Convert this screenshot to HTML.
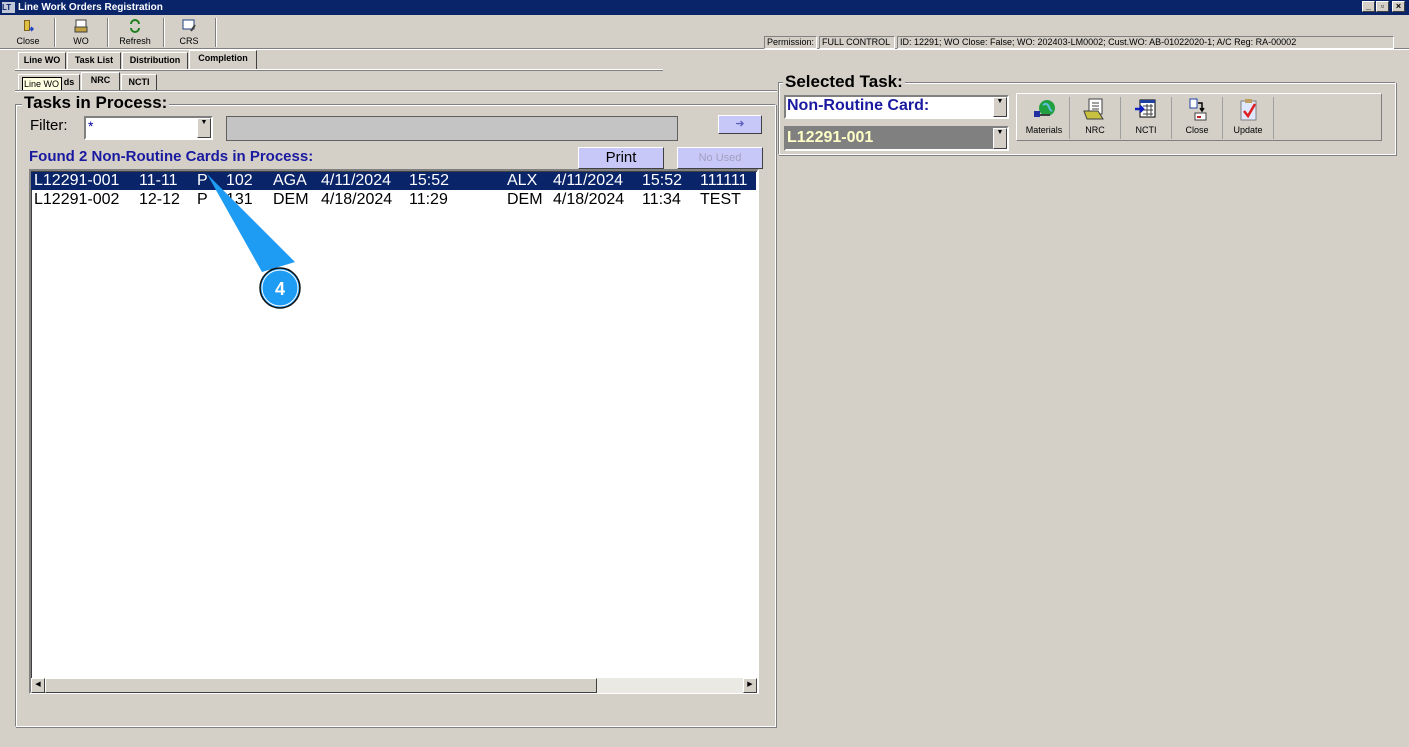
<!DOCTYPE html>
<html><head><meta charset="utf-8">
<style>
*{box-sizing:border-box;margin:0;padding:0}
body{width:1409px;height:747px;background:#d4d0c8;font-family:"Liberation Sans",Arial,sans-serif;position:relative;overflow:hidden;color:#000}
.a{position:absolute}
.title{left:0;top:0;width:1409px;height:15px;background:#0a246a;color:#fff;font-size:10px;font-weight:bold;line-height:15px;padding-left:18px}
.wb{top:1px;width:13px;height:11px;background:#d4d0c8;border:1px solid;border-color:#fff #404040 #404040 #fff;font-size:9px;line-height:9px;text-align:center;font-weight:bold;color:#000}
.tb{top:18px;height:30px;font-size:9px;text-align:center;color:#000}
.sep{top:18px;width:2px;height:29px;border-left:1px solid #808080;border-right:1px solid #fff}
.sunk{border:1px solid;border-color:#808080 #fff #fff #808080;font-size:9px;line-height:11px;padding-left:2px;white-space:nowrap;overflow:hidden}
.tab{font-size:9px;font-weight:bold;line-height:14px;text-align:center;border:1px solid;border-color:#fff #404040 transparent #fff;border-bottom:none}
.grp{border:1px solid;border-color:#808080 #fff #fff #808080;box-shadow:inset 1px 1px 0 #fff,1px 1px 0 #808080}
.gt{font-size:16px;font-weight:bold;background:#d4d0c8;padding:0 2px;line-height:16px}
.btn{background:#c8c8f8;border:1px solid;border-color:#fff #404040 #404040 #fff;text-align:center}
.list{background:#fff;border:2px solid;border-color:#808080 #fff #fff #808080;box-shadow:inset 1px 1px 0 #404040}
.row{font-size:16px;line-height:17px;white-space:nowrap;height:17px}
.row span{position:absolute;top:0}
.combo{background:#fff;border:2px solid;border-color:#808080 #fff #fff #808080}
.dd{position:absolute;right:0;top:0;width:14px;height:100%;background:#d4d0c8;border:1px solid;border-color:#fff #404040 #404040 #fff;font-size:7px;text-align:center}
.tbt{top:97px;height:42px;width:51px;font-size:9px;text-align:center;border-right:1px solid #a0a0a0}
</style></head><body>
<div class="a title">Line Work Orders Registration</div>
<div class="a" style="left:2px;top:2px;width:13px;height:11px;background:#c0c8d8;font-size:8px;color:#0a246a;font-weight:bold;line-height:11px">LT</div>
<div class="a wb" style="left:1362px">_</div>
<div class="a wb" style="left:1376px">▫</div>
<div class="a wb" style="left:1392px">×</div>

<div class="a tb" style="left:6px;width:44px">
<svg width="16" height="16" viewBox="0 0 16 16"><rect x="4" y="2" width="6" height="11" fill="#806020"/><rect x="5" y="3" width="4" height="9" fill="#e0c040"/><path d="M9 11h4M11 9l2 2-2 2" stroke="#2040c0" stroke-width="1.5" fill="none"/></svg><br>Close</div>
<div class="a sep" style="left:54px"></div>
<div class="a tb" style="left:59px;width:44px">
<svg width="16" height="16" viewBox="0 0 16 16"><rect x="3" y="2" width="10" height="8" fill="#fff" stroke="#404040"/><rect x="2" y="9" width="12" height="5" fill="#c0a040" stroke="#404040"/></svg><br>WO</div>
<div class="a sep" style="left:107px"></div>
<div class="a tb" style="left:112px;width:46px">
<svg width="16" height="16" viewBox="0 0 16 16"><path d="M4 6a4 4 0 0 1 8 0M12 10a4 4 0 0 1-8 0" stroke="#208020" stroke-width="2" fill="none"/></svg><br>Refresh</div>
<div class="a sep" style="left:163px"></div>
<div class="a tb" style="left:167px;width:44px">
<svg width="16" height="16" viewBox="0 0 16 16"><rect x="2" y="2" width="11" height="9" fill="#fff" stroke="#204080"/><path d="M10 13l4-6" stroke="#404040" stroke-width="2"/></svg><br>CRS</div>
<div class="a sep" style="left:215px"></div>

<div class="a" style="left:0;top:48px;width:1409px;height:1px;background:#808080"></div>
<div class="a" style="left:0;top:49px;width:1409px;height:1px;background:#fff"></div>

<div class="a sunk" style="left:764px;top:36px;width:53px;height:13px">Permission:</div>
<div class="a sunk" style="left:819px;top:36px;width:76px;height:13px">FULL CONTROL</div>
<div class="a sunk" style="left:897px;top:36px;width:497px;height:13px">ID: 12291; WO Close: False; WO: 202403-LM0002; Cust.WO: AB-01022020-1; A/C Reg: RA-00002</div>

<div class="a tab" style="left:18px;top:52px;width:48px;height:17px">Line WO</div>
<div class="a tab" style="left:67px;top:52px;width:54px;height:17px">Task List</div>
<div class="a tab" style="left:122px;top:52px;width:66px;height:17px">Distribution</div>
<div class="a tab" style="left:189px;top:50px;width:68px;height:19px;background:#d4d0c8">Completion</div>
<div class="a" style="left:15px;top:69px;width:648px;height:1px;background:#fff"></div>
<div class="a" style="left:15px;top:70px;width:648px;height:1px;background:#808080"></div>

<div class="a tab" style="left:18px;top:74px;width:62px;height:17px;padding-left:40px">ds</div>
<div class="a tab" style="left:81px;top:72px;width:39px;height:19px">NRC</div>
<div class="a tab" style="left:121px;top:74px;width:36px;height:17px">NCTI</div>
<div class="a" style="left:22px;top:77px;width:40px;height:14px;background:#ffffe1;border:1px solid #000;font-size:9px;line-height:12px;padding-left:1px">Line WO</div>
<div class="a" style="left:15px;top:91px;width:762px;height:1px;background:#fff"></div>
<div class="a" style="left:15px;top:90px;width:762px;height:1px;background:#808080"></div>

<div class="a grp" style="left:15px;top:104px;width:761px;height:623px"></div>
<div class="a gt" style="left:22px;top:95px;font-size:17px">Tasks in Process:</div>
<div class="a" style="left:30px;top:117px;font-size:15px">Filter:</div>
<div class="a combo" style="left:84px;top:116px;width:129px;height:24px"><span style="position:absolute;left:2px;top:0;font-size:14px;color:#0000a0">*</span><div class="dd">▼</div></div>
<div class="a" style="left:226px;top:116px;width:452px;height:25px;background:#c4c4c4;border:1px solid #606060"></div>
<div class="a btn" style="left:718px;top:115px;width:44px;height:19px;font-size:11px;color:#6060c0;line-height:16px">➜</div>
<div class="a" style="left:29px;top:148px;font-size:15px;font-weight:bold;color:#1a1aa0">Found 2 Non-Routine Cards in Process:</div>
<div class="a btn" style="left:578px;top:147px;width:86px;height:22px;font-size:15px;line-height:20px">Print</div>
<div class="a btn" style="left:677px;top:147px;width:86px;height:22px;font-size:11px;line-height:20px;color:#a0a0c0">No Used</div>

<div class="a list" style="left:29px;top:169px;width:730px;height:525px">
 <div class="a row" style="left:0;top:1px;width:725px;background:#0a246a;color:#fff;height:18px"><span style="left:3px">L12291-001</span><span style="left:108px">11-11</span><span style="left:166px">P</span><span style="left:195px">102</span><span style="left:242px">AGA</span><span style="left:290px">4/11/2024</span><span style="left:378px">15:52</span><span style="left:476px">ALX</span><span style="left:522px">4/11/2024</span><span style="left:611px">15:52</span><span style="left:669px">111111</span></div>
 <div class="a row" style="left:0;top:20px;width:725px"><span style="left:3px">L12291-002</span><span style="left:108px">12-12</span><span style="left:166px">P</span><span style="left:195px">131</span><span style="left:242px">DEM</span><span style="left:290px">4/18/2024</span><span style="left:378px">11:29</span><span style="left:476px">DEM</span><span style="left:522px">4/18/2024</span><span style="left:611px">11:34</span><span style="left:669px">TEST</span></div>
 <div class="a" style="left:0;top:507px;width:726px;height:15px;background:#ebe9e4"></div>
 <div class="a" style="left:0;top:507px;width:14px;height:15px;background:#d4d0c8;border:1px solid;border-color:#fff #404040 #404040 #fff;font-size:7px;text-align:center;line-height:12px">◀</div>
 <div class="a" style="left:14px;top:507px;width:552px;height:15px;background:#d4d0c8;border:1px solid;border-color:#fff #404040 #404040 #fff"></div>
 <div class="a" style="left:712px;top:507px;width:14px;height:15px;background:#d4d0c8;border:1px solid;border-color:#fff #404040 #404040 #fff;font-size:7px;text-align:center;line-height:12px">▶</div>
</div>

<div class="a grp" style="left:778px;top:82px;width:618px;height:73px"></div>
<div class="a gt" style="left:783px;top:74px;font-size:17px">Selected Task:</div>
<div class="a combo" style="left:784px;top:95px;width:225px;height:24px"><span style="position:absolute;left:1px;top:0;font-size:16px;font-weight:bold;color:#1a1aa0">Non-Routine Card:</span><div class="dd">▼</div></div>
<div class="a combo" style="left:784px;top:126px;width:225px;height:25px;background:#808080"><span style="position:absolute;left:1px;top:1px;font-size:16px;font-weight:bold;color:#ffffc8">L12291-001</span><div class="dd">▼</div></div>
<div class="a" style="left:1016px;top:93px;width:366px;height:48px;border:1px solid;border-color:#fff #808080 #808080 #fff"></div>
<div class="a tbt" style="left:1019px">
<svg width="28" height="26" viewBox="0 0 28 26"><circle cx="17" cy="11" r="8" fill="#20a040"/><path d="M13 8q4-3 6 2t3 3" stroke="#60c0e0" stroke-width="2" fill="none"/><rect x="4" y="14" width="6" height="6" fill="#2030a0"/><path d="M10 18h10" stroke="#404040" stroke-width="2"/></svg><br>Materials</div>
<div class="a tbt" style="left:1070px">
<svg width="28" height="26" viewBox="0 0 28 26"><rect x="8" y="2" width="13" height="15" fill="#fff" stroke="#404040"/><path d="M11 6h7M11 9h7M11 12h7" stroke="#404040"/><path d="M3 14h14l5 8H6z" fill="#c8c040" stroke="#404040"/></svg><br>NRC</div>
<div class="a tbt" style="left:1121px">
<svg width="28" height="26" viewBox="0 0 28 26"><rect x="8" y="3" width="15" height="17" fill="#fff" stroke="#000"/><rect x="8" y="3" width="15" height="3" fill="#2040a0"/><path d="M11 9h10M11 13h10M11 17h10M15 7v12M19 7v12" stroke="#404040"/><path d="M3 12h7M8 9l3 3-3 3" stroke="#1020c0" stroke-width="2.5" fill="none"/></svg><br>NCTI</div>
<div class="a tbt" style="left:1172px">
<svg width="28" height="26" viewBox="0 0 28 26"><rect x="7" y="2" width="7" height="9" fill="#fff" stroke="#2040a0"/><path d="M15 6h4v7M17 11l2 3 2-3" stroke="#000" stroke-width="1.5" fill="none"/><rect x="12" y="16" width="11" height="7" fill="#fff" stroke="#404040"/><rect x="14" y="19" width="4" height="2" fill="#c02020"/></svg><br>Close</div>
<div class="a tbt" style="left:1223px">
<svg width="28" height="26" viewBox="0 0 28 26"><rect x="7" y="4" width="15" height="19" fill="#e0e8ff" stroke="#808080"/><rect x="11" y="2" width="7" height="4" fill="#c0a060"/><path d="M10 14l4 5 7-12" stroke="#e02020" stroke-width="2.5" fill="none"/></svg><br>Update</div>

<svg class="a" style="left:0;top:0" width="400" height="320">
<polygon points="207,174 262,272 295,262" fill="#1e9bf2"/>
<circle cx="280" cy="288" r="20" fill="#1e9bf2" stroke="#111" stroke-width="1.5"/>
<circle cx="280" cy="288" r="18" fill="none" stroke="#fff" stroke-width="1"/>
<text x="280" y="295" font-family="Liberation Sans" font-weight="bold" font-size="18" fill="#fff" text-anchor="middle">4</text>
</svg>
</body></html>
